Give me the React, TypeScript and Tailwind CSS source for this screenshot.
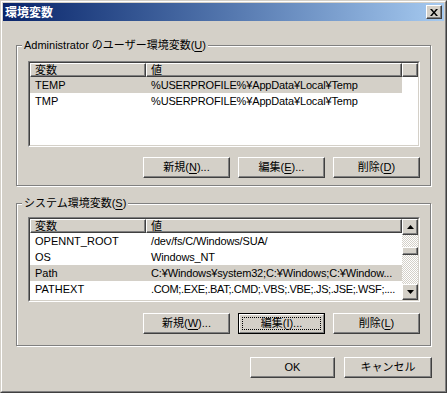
import React from 'react';

type Row = { name: string; value: string; selected?: boolean; tight?: boolean };

const userRows: Row[] = [
  { name: 'TEMP', value: '%USERPROFILE%¥AppData¥Local¥Temp', selected: true },
  { name: 'TMP', value: '%USERPROFILE%¥AppData¥Local¥Temp' },
];

const systemRows: Row[] = [
  { name: 'OPENNT_ROOT', value: '/dev/fs/C/Windows/SUA/' },
  { name: 'OS', value: 'Windows_NT' },
  { name: 'Path', value: 'C:¥Windows¥system32;C:¥Windows;C:¥Window...', selected: true },
  { name: 'PATHEXT', value: '.COM;.EXE;.BAT;.CMD;.VBS;.VBE;.JS;.JSE;.WSF;....', tight: true },
];

const Key = ({ k }: { k: string }) => <span className="underline underline-offset-2">{k}</span>;

const Btn = ({ children, w = 'w-[87px]', focused = false }: { children: React.ReactNode; w?: string; focused?: boolean }) => {
  if (focused) {
    return (
      <div className={`${w} h-[21px] border border-black`}>
        <div className="h-full border border-t-white border-l-white border-r-[#808080] border-b-[#808080] p-[2px]">
          <div className="h-full border border-dotted border-black flex items-center justify-center">{children}</div>
        </div>
      </div>
    );
  }
  return (
    <div
      className={`${w} h-[21px] border border-t-white border-l-white border-r-[#404040] border-b-[#404040] shadow-[inset_-1px_-1px_0_#808080] flex items-center justify-center`}
    >
      {children}
    </div>
  );
};

const Raised = ({ className = '', children }: { className?: string; children?: React.ReactNode }) => (
  <div
    className={`border border-t-white border-l-white border-r-[#404040] border-b-[#404040] shadow-[inset_-1px_-1px_0_#808080] bg-[#d4d0c8] ${className}`}
  >
    {children}
  </div>
);

const Arrow = ({ down = false }: { down?: boolean }) => (
  <svg width="7" height="4" viewBox="0 0 7 4" className="block">
    {down ? <polygon points="0,0 7,0 3.5,4" fill="#000" /> : <polygon points="3.5,0 7,4 0,4" fill="#000" />}
  </svg>
);

const Scrollbar = () => (
  <div className="w-[16px] flex flex-col">
    <Raised className="h-[16px] flex items-center justify-center">
      <Arrow />
    </Raised>
    <div className="flex-1 pt-[12px] bg-[repeating-conic-gradient(#d4d0c8_0_25%,#ffffff_0_50%)] bg-[length:2px_2px]">
      <Raised className="h-[8px]" />
    </div>
    <Raised className="h-[16px] flex items-center justify-center">
      <Arrow down />
    </Raised>
  </div>
);

const ListView = ({ rows, h, scroll = false }: { rows: Row[]; h: string; scroll?: boolean }) => (
  <div className={`w-[392px] ${h} border border-t-[#808080] border-l-[#808080] border-r-white border-b-white`}>
    <div className="h-full flex border border-t-[#404040] border-l-[#404040] border-r-[#d4d0c8] border-b-[#d4d0c8] bg-white">
      <div className="flex-1 min-w-0 flex flex-col">
        <div className="flex h-[14px]">
          <Raised className="w-[116px] pl-[4px] leading-[12px]">変数</Raised>
          <Raised className="w-[256px] pl-[4px] leading-[12px]">値</Raised>
          {!scroll && <Raised className="flex-1" />}
        </div>
        {rows.map((r) => (
          <div key={r.name} className={`flex w-[372px] h-[16px] items-center ${r.selected ? 'bg-[#d4d0c8]' : ''}`}>
            <div className="w-[116px] pl-[5px] whitespace-nowrap overflow-hidden">{r.name}</div>
            <div className={`w-[256px] pl-[5px] whitespace-nowrap overflow-hidden ${r.tight ? 'tracking-[-0.35px]' : 'tracking-[-0.15px]'}`}>
              {r.value}
            </div>
          </div>
        ))}
      </div>
      {scroll && <Scrollbar />}
    </div>
  </div>
);

const Group = ({ label, h, pt, children }: { label: React.ReactNode; h: string; pt: string; children: React.ReactNode }) => (
  <div className={`relative w-[415px] ${h} ${pt} pl-[11px] border border-[#808080] shadow-[inset_1px_1px_0_#fff,1px_1px_0_#fff]`}>
    <div className="absolute top-[-8px] left-[5px] px-[2px] bg-[#d4d0c8] leading-[14px] whitespace-nowrap">{label}</div>
    {children}
  </div>
);

export default function App() {
  return (
    <div className="w-[447px] h-[393px] bg-[#d4d0c8] text-black text-[11px] font-['Liberation_Sans','Noto_Sans_CJK_JP',sans-serif] border border-t-[#d4d0c8] border-l-[#d4d0c8] border-r-[#404040] border-b-[#404040]">
      <div className="h-full border border-t-white border-l-white border-r-[#808080] border-b-[#808080] p-px">
        {/* title bar */}
        <div className="h-[18px] flex items-center justify-between pl-[2px] pr-[2px] bg-linear-to-r from-[#0a246a] to-[#a6caf0]">
          <span className="text-white font-bold text-[12px] font-['Noto_Sans_CJK_JP',sans-serif] leading-none">環境変数</span>
          <Raised className="w-[16px] h-[14px] flex items-center justify-center">
            <svg width="8" height="7" viewBox="0 0 8 7" className="block">
              <path d="M0 0h2l2 2.5L6 0h2L5 3.5 8 7H6L4 4.5 2 7H0l3-3.5z" fill="#000" />
            </svg>
          </Raised>
        </div>

        <div className="pl-[13px] pt-[24px]">
          <Group label={<>Administrator のユーザー環境変数(<Key k="U" />)</>} h="h-[141px]" pt="pt-[15px]">
            <ListView rows={userRows} h="h-[86px]" />
            <div className="mt-[10px] w-[392px] flex justify-end gap-[8px]">
              <Btn>新規(<Key k="N" />)...</Btn>
              <Btn>編集(<Key k="E" />)...</Btn>
              <Btn>削除(<Key k="D" />)</Btn>
            </div>
          </Group>

          <div className="mt-[17px]">
            <Group label={<>システム環境変数(<Key k="S" />)</>} h="h-[143px]" pt="pt-[13px]">
              <ListView rows={systemRows} h="h-[85px]" scroll />
              <div className="mt-[11px] w-[392px] flex justify-end gap-[8px]">
                <Btn>新規(<Key k="W" />)...</Btn>
                <Btn focused>編集(<Key k="I" />)...</Btn>
                <Btn>削除(<Key k="L" />)</Btn>
              </div>
            </Group>
          </div>

          <div className="mt-[11px] w-[416px] flex justify-end gap-[9px]">
            <Btn w="w-[85px]">OK</Btn>
            <Btn w="w-[88px]">キャンセル</Btn>
          </div>
        </div>
      </div>
    </div>
  );
}
